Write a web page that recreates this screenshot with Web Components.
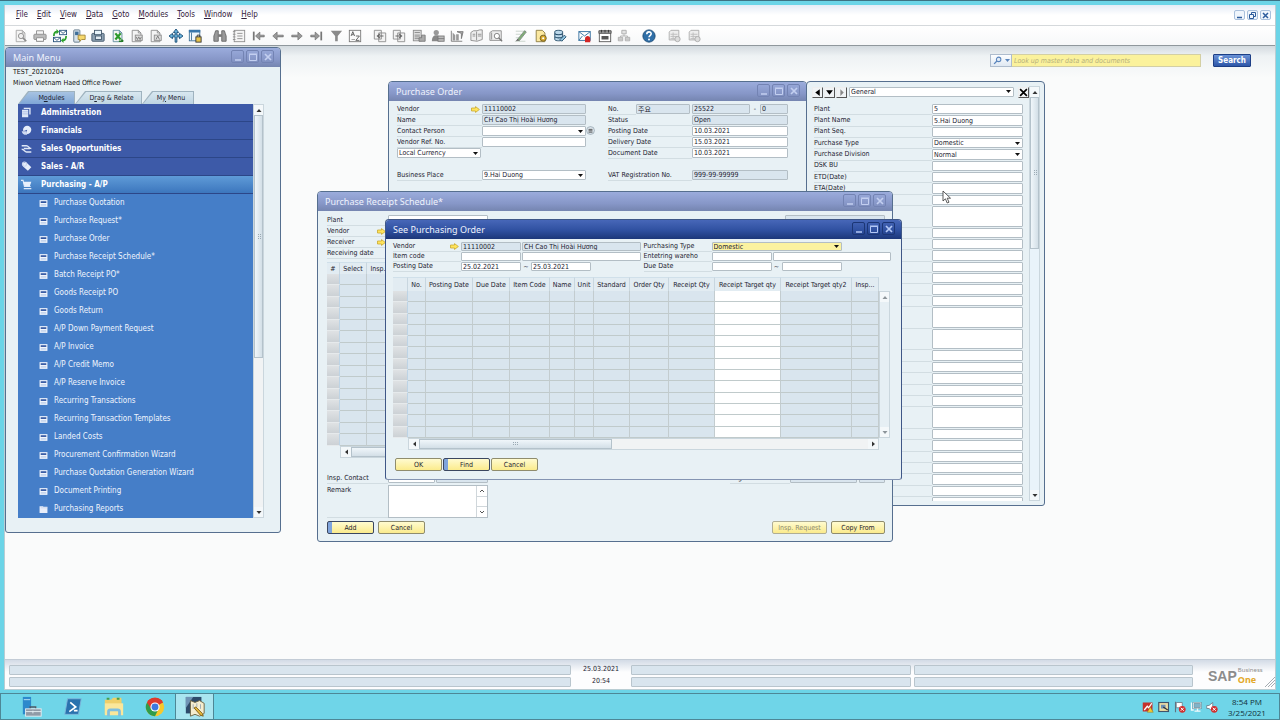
<!DOCTYPE html>
<html lang="en">
<head>
<meta charset="utf-8">
<title>SAP Business One</title>
<style>
    html, body {
        height: 100%;
        margin: 0;
    }
    body {
        --ui: "DejaVu Sans Condensed", "Open Sans", "Noto Sans CJK KR", sans-serif;
        --title: "Noto Sans", "Open Sans", sans-serif;
        --ink: #1d2230;
        --panel: #e8f1f5;
        --line: #b3bec5;
        display: flex;
        flex-direction: column;
        box-sizing: border-box;
        border-top: 1px solid #3d7284;
        background: #6bd4e7;
        color: var(--ink);
        font: 7px/10px var(--ui);
        overflow: hidden;
    }
    .app {
        flex: 1;
        min-height: 0;
        display: flex;
        flex-direction: column;
        margin: 4px 4px 3px;
        border: 1px solid #b9cdd3;
        border-top: 0;
        background: #fff;
    }
    .desktop {
        position: relative;
        flex: 1;
        min-height: 0;
        overflow: hidden;
        background: linear-gradient(#d3dadf, #eef2f4 10px, #fafbfb 32px);
    }
    /* MDI windows float freely on the desktop */
    b1-window, .cursor {
        position: absolute;
    }
    #main-menu { left: 0; top: 1px; width: 276px; height: 486px; }
    #order { left: 383px; top: 35px; width: 419px; height: 425px; }
    #user-fields { left: 801px; top: 35px; width: 239px; height: 425px; }
    #schedule { left: 312px; top: 145px; width: 576px; height: 351px; }
    #see-order { left: 380px; top: 173px; width: 517px; height: 261px; }
    .cursor { left: 937px; top: 144px; }

    .row { display: flex; }
    .col { display: flex; flex-direction: column; }
    .push { margin-left: auto; }

    .company { padding: 0 7px 2px; line-height: 11px; }
    .company div { color: #111; }
    .menu-area { padding: 0 16px 0 12px; }

    .order-form { padding: 3px 18px 0 8px; justify-content: space-between; }
    .order-form .left { width: 198px; --label: 85px; }
    .order-form .right { width: 180px; --label: 84px; }
    .gap { height: 11px; }

    .uf-bar { display: flex; align-items: center; gap: 1px; flex: 0 0 12px; margin-bottom: 6px; }
    .uf { padding: 4px 4px 4px 5px; box-sizing: border-box; height: 100%; }
    .uf-main { flex: 1; min-width: 0; min-height: 0; overflow: hidden; }
    .uf-list { flex: 0 0 393px; --label: 118px; padding: 0 6px 0 2px; }
    .uf-list b1-field { flex: 11; }
    .uf-list b1-field.tall { flex: 21; }
    .uf-rest { --label: 118px; padding: 0 6px 0 2px; }

    .schedule { box-sizing: border-box; height: 100%; padding: 4px 7px 7px 9px; }
    .schedule .head { --label: 61px; }
    .see { box-sizing: border-box; height: 100%; padding: 3px 10px 8px 7px; --row: 10px; }
    .see .head { gap: 3px; }
    .see .left { width: 248px; --label: 68px; }
    .see .right { width: 248px; --label: 68px; }
    .tilde { width: 10px; text-align: center; }
</style>
</head>
<body>

<div class="app">
    <b1-menubar></b1-menubar>
    <b1-toolbar></b1-toolbar>

    <main class="desktop">
        <b1-search></b1-search>

        <b1-window id="main-menu" heading="Main Menu">
            <div class="company">
                <div>TEST_20210204</div>
                <div>Miwon Vietnam Haed Office Power</div>
            </div>
            <div class="menu-area">
                <b1-tabs></b1-tabs>
                <b1-tree></b1-tree>
            </div>
        </b1-window>

        <b1-window id="order" heading="Purchase Order">
            <div class="row order-form">
                <div class="col left">
                    <b1-field label="Vendor" value="11110002" kind="readonly" link style="--control: 0 0 104px"></b1-field>
                    <b1-field label="Name" value="CH Cao Thị Hoài Hương" kind="readonly" style="--control: 0 0 104px"></b1-field>
                    <b1-field label="Contact Person" kind="select" style="--control: 0 0 104px"><b1-icon name="list" size="9"></b1-icon></b1-field>
                    <b1-field label="Vendor Ref. No." style="--control: 0 0 104px"></b1-field>
                    <b1-field value="Local Currency" kind="select" name="Currency" style="--control: 0 0 84px"></b1-field>
                    <div class="gap"></div>
                    <b1-field label="Business Place" value="9.Hai Duong" kind="select" style="--control: 0 0 104px"></b1-field>
                </div>
                <div class="col right">
                    <b1-field label="No." value="주요" kind="readonly" style="--label: 28px; --control: 0 0 54px">
                        <b1-field name="Number" value="25522" kind="readonly" style="width: 58px; margin-left: 2px"></b1-field>
                        <span class="tilde">-</span>
                        <b1-field name="Sub number" value="0" kind="readonly" style="flex: 1"></b1-field>
                    </b1-field>
                    <b1-field label="Status" value="Open" kind="readonly"></b1-field>
                    <b1-field label="Posting Date" value="10.03.2021"></b1-field>
                    <b1-field label="Delivery Date" value="15.03.2021"></b1-field>
                    <b1-field label="Document Date" value="10.03.2021"></b1-field>
                    <div class="gap"></div>
                    <b1-field label="VAT Registration No." value="999-99-99999" kind="readonly"></b1-field>
                </div>
            </div>
        </b1-window>

        <b1-window id="user-fields" plain>
            <div class="row uf">
                <div class="col uf-main">
                    <div class="uf-bar">
                        <b1-nav dir="left"></b1-nav>
                        <b1-nav dir="down"></b1-nav>
                        <b1-nav dir="right"></b1-nav>
                        <b1-field name="Category" value="General" kind="select" style="width: 165px; margin-left: 1px"></b1-field>
                        <b1-nav class="push" dir="close"></b1-nav>
                    </div>
                    <div class="col uf-list">
                        <b1-field label="Plant" value="5"></b1-field>
                        <b1-field label="Plant Name" value="5.Hai Duong"></b1-field>
                        <b1-field label="Plant Seq."></b1-field>
                        <b1-field label="Purchase Type" value="Domestic" kind="select"></b1-field>
                        <b1-field label="Purchase Division" value="Normal" kind="select"></b1-field>
                        <b1-field label="DSK BU"></b1-field>
                        <b1-field label="ETD(Date)"></b1-field>
                        <b1-field label="ETA(Date)"></b1-field>
                        <b1-field label=" "></b1-field>
                        <b1-field label=" " class="tall"></b1-field>
                        <b1-field label=" "></b1-field>
                        <b1-field label=" "></b1-field>
                        <b1-field label=" "></b1-field>
                        <b1-field label=" "></b1-field>
                        <b1-field label=" "></b1-field>
                        <b1-field label=" "></b1-field>
                        <b1-field label=" "></b1-field>
                        <b1-field label=" " class="tall"></b1-field>
                        <b1-field label=" " class="tall"></b1-field>
                        <b1-field label=" "></b1-field>
                        <b1-field label=" "></b1-field>
                        <b1-field label=" "></b1-field>
                        <b1-field label=" "></b1-field>
                        <b1-field label=" "></b1-field>
                        <b1-field label=" " class="tall"></b1-field>
                        <b1-field label=" "></b1-field>
                        <b1-field label=" "></b1-field>
                        <b1-field label=" "></b1-field>
                        <b1-field label=" "></b1-field>
                        <b1-field label=" "></b1-field>
                        <b1-field label=" "></b1-field>
                    </div>
                    <div class="uf-rest"><b1-field label=" "></b1-field></div>
                </div>
                <b1-scrollbar style="--thumb: 152px; --track: #e9f3fa"></b1-scrollbar>
            </div>
        </b1-window>

        <b1-window id="schedule" heading="Purchase Receipt Schedule*">
            <div class="col schedule">
                <div class="row head">
                    <div class="col" style="width: 161px">
                        <b1-field label="Plant"></b1-field>
                        <b1-field label="Vendor" kind="readonly" link></b1-field>
                        <b1-field label="Receiver" kind="readonly" link></b1-field>
                        <b1-field label="Receiving date"></b1-field>
                    </div>
                    <div class="col push" style="width: 100px">
                        <b1-field name="Document number" kind="readonly"></b1-field>
                    </div>
                </div>
                <b1-grid rows="15" head="12" columns="#:13,Select:27,Insp...:27,:60,:428" style="height: 184px; margin-top: 3px"></b1-grid>
                <b1-scrollbar horizontal style="--thumb: 160px; margin-left: 13px"></b1-scrollbar>
                <div class="row" style="margin-top: auto; margin-bottom: 1px">
                    <b1-field label="Insp. Contact" style="--label: 61px; --control: 0 0 47px; width: 161px">
                        <b1-field name="Contact name" kind="readonly" style="flex: 1; margin-left: 1px"></b1-field>
                    </b1-field>
                    <b1-field class="push" label="Register Date" kind="readonly" style="--label: 60px; --control: 0 0 67px; width: 155px">
                        <b1-field name="Register time" kind="readonly" style="flex: 1; margin-left: 2px"></b1-field>
                    </b1-field>
                </div>
                <b1-memo label="Remark"></b1-memo>
                <div class="row" style="gap: 4px; margin-top: 3px">
                    <b1-button default>Add</b1-button>
                    <b1-button>Cancel</b1-button>
                    <b1-button class="push" disabled style="width: 55px">Insp. Request</b1-button>
                    <b1-button style="width: 54px">Copy From</b1-button>
                </div>
            </div>
        </b1-window>

        <b1-window id="see-order" heading="See Purchasing Order" active>
            <div class="col see">
                <div class="row head">
                    <div class="col left">
                        <b1-field label="Vendor" value="11110002" kind="readonly" link style="--control: 0 0 60px">
                            <b1-field name="Vendor name" value="CH Cao Thị Hoài Hương" kind="readonly" style="flex: 1; margin-left: 1px"></b1-field>
                        </b1-field>
                        <b1-field label="Item code" style="--control: 0 0 60px">
                            <b1-field name="Item name" style="flex: 1; margin-left: 1px"></b1-field>
                        </b1-field>
                        <b1-field label="Posting Date" value="25.02.2021" style="--control: 0 0 60px">
                            <span class="tilde">~</span>
                            <b1-field name="Posting date to" value="25.03.2021" style="width: 60px"></b1-field>
                        </b1-field>
                    </div>
                    <div class="col right">
                        <b1-field label="Purchasing Type" value="Domestic" kind="select" focused style="--control: 0 0 130px"></b1-field>
                        <b1-field label="Entetring wareho" style="--control: 0 0 60px">
                            <b1-field name="Warehouse name" style="flex: 1; margin-left: 1px"></b1-field>
                        </b1-field>
                        <b1-field label="Due Date" style="--control: 0 0 60px">
                            <span class="tilde">~</span>
                            <b1-field name="Due date to" style="width: 60px"></b1-field>
                        </b1-field>
                    </div>
                </div>
                <div class="row" style="margin-top: 5px">
                    <b1-grid rows="13" head="14" columns=":15,No.:18,Posting Date:47,Due Date:37,Item Code:40,Name:25,Unit:19,Standard:36,Order Qty:39,Receipt Qty:46,*Receipt Target qty:66,Receipt Target qty2:71,Insp...:27" style="height: 161px"></b1-grid>
                    <b1-scrollbar off style="margin-top: 14px"></b1-scrollbar>
                </div>
                <b1-scrollbar horizontal style="--thumb: 193px; margin: 0 12px 0 15px"></b1-scrollbar>
                <div class="row" style="gap: 1px; margin: auto 0 0 2px">
                    <b1-button>OK</b1-button>
                    <b1-button default>Find</b1-button>
                    <b1-button>Cancel</b1-button>
                </div>
            </div>
        </b1-window>

        <svg class="cursor" width="10" height="15" viewBox="0 0 10 15">
            <path d="M1 1v10l2.400-2.200 1.800 4.200 1.800-.8-1.800-4h3.300z" fill="#fff" stroke="#333" stroke-width=".8"/>
        </svg>
    </main>

    <b1-statusbar></b1-statusbar>
</div>

<os-taskbar></os-taskbar>

<script>
// Icon bodies, all on a 16x16 grid
const G = '#8b8b8b';
const page = (c = G) => `<path d="M2.500 1.500h7l3 3v10h-10z" fill="#f4f4f4" stroke="${c}"/><path d="M9.500 1.500v3h3" fill="none" stroke="${c}"/>`;
const ICONS = {
    preview: page('#a5a5a5') + `<circle cx="8" cy="8" r="3" fill="#eee" stroke="${G}"/><path d="M10 10l4 4" stroke="${G}" stroke-width="2"/>`,
    print: `<path d="M4 6V2h8v4M4 10v4h8v-4" fill="#f5f5f5" stroke="${G}"/><rect x="1" y="6" width="14" height="6" rx="1" fill="#bbb" stroke="${G}"/><path d="M4 10h8v4H4z" fill="#fff" stroke="${G}"/>`,
    mail: `<rect x="7.500" y="1.500" width="8" height="5" fill="#fff" stroke="#24507a"/><path d="M8 2l3.500 3L15 2" fill="none" stroke="#24507a"/><rect x=".5" y="9.500" width="8" height="5" fill="#fff" stroke="#24507a"/><path d="M1 10l3.500 3L8 10" fill="none" stroke="#24507a"/><path d="M1 8c0-4 2-5 4-5M15 8c0 4-2 5-4 5" fill="none" stroke="#2da12d" stroke-width="2"/><path d="M4 0l3 3-3 3zM12 10l-3 3 3 3z" fill="#2da12d"/>`,
    sms: `<rect x="2" y="1" width="7" height="14" rx="1" fill="#d7e2ea" stroke="#5b7386"/><rect x="3.500" y="3" width="4" height="4" fill="#3e6e98"/><path d="M7 7h8v5h-4l-2 2v-2H7z" fill="#f6d86b" stroke="#a28430"/>`,
    fax: `<rect x="1" y="5" width="14" height="9" rx="1" fill="#8ea2b3" stroke="#3f5468"/><rect x="4" y="1.500" width="8" height="5" fill="#e8f4fb" stroke="#3f5468"/><rect x="5" y="8" width="7" height="4" fill="#e2ebf2" stroke="#3f5468"/>`,
    excel: page('#5a8a9a') + `<path d="M5 5l6 7M11 5l-6 7" stroke="#2b9a2b" stroke-width="2.500"/><path d="M9 14h5M12 12l2 2" stroke="#257b25" stroke-width="1.500"/>`,
    word: page() + `<rect x="6" y="7" width="8" height="6" fill="#ddd" stroke="${G}"/><path d="M7 9l1.500 3L10 9l1.500 3L13 9" fill="none" stroke="#777"/>`,
    pdf: page() + `<rect x="6" y="7" width="8" height="6" fill="#ddd" stroke="${G}"/><path d="M8 12l2-4 2 4" fill="none" stroke="#777"/>`,
    launch: `<path d="M8 0l3 4H9v3h3V5l4 3-4 3V9H9v6H7V9H4v2L0 8l4-3v2h3V4H5z" fill="#6ab4dd" stroke="#174a74"/>`,
    lock: `<rect x="1.500" y="1.500" width="12" height="12" fill="#eef6fb" stroke="#3a6d94"/><path d="M1 1h13v3H1z" fill="#3877ab"/><path d="M4 4v9" stroke="#3a6d94"/><rect x="9" y="9" width="6" height="6" fill="#e7c44b" stroke="#333"/><path d="M10.500 9V7h3v2" fill="none" stroke="#333"/>`,
    find: `<path d="M2 5l1-3h3v12H1V8zM14 5l-1-3h-3v12h5V8z" fill="#999" stroke="#666"/><path d="M6 6h4v3H6z" fill="#777"/>`,
    form: `<rect x="2.500" y="1.500" width="12" height="13" fill="#f5f5f5" stroke="${G}"/><path d="M6 5h6M6 8h6M6 11h6" stroke="${G}"/><path d="M1 3h3M1 6h3M1 9h3M1 12h3" stroke="${G}"/>`,
    first: `<path d="M2 3v10" stroke="#777" stroke-width="2"/><path d="M4 8l5-4.500V7h5v2H9v3.500z" fill="#999" stroke="#666" stroke-width=".7"/>`,
    prev: `<path d="M2 8l5-4.500V7h7v2H7v3.500z" fill="#999" stroke="#666" stroke-width=".7"/>`,
    next: `<path d="M14 8L9 3.500V7H2v2h7v3.500z" fill="#999" stroke="#666" stroke-width=".7"/>`,
    last: `<path d="M14 3v10" stroke="#777" stroke-width="2"/><path d="M12 8L7 3.500V7H2v2h5v3.500z" fill="#999" stroke="#666" stroke-width=".7"/>`,
    filter: `<path d="M2 2h13l-5 6v6H7V8z" fill="#8a8a8a"/>`,
    sort: `<rect x="1.500" y="1.500" width="13" height="13" fill="#fafafa" stroke="#777"/><path d="M3.500 8l2-5 2 5M4.500 6.500h2M9 8h4l-4 5h4" fill="none" stroke="#555"/><path d="M4 12h4" stroke="#999"/>`,
    base: `<path d="M1.500 1.500h8v10h-8zM6.500 4.500h8v10h-8z" fill="#f2f2f2" stroke="${G}"/><path d="M12 8H6M8 5.500L5 8l3 2.500" fill="none" stroke="#666" stroke-width="1.300"/>`,
    target: `<path d="M1.500 1.500h8v10h-8zM6.500 4.500h8v10h-8z" fill="#f2f2f2" stroke="${G}"/><path d="M4 8h6M8 5.500L11 8l-3 2.500" fill="none" stroke="#666" stroke-width="1.300"/>`,
    calc: `<rect x="1.500" y="1.500" width="9" height="12" fill="#ddd" stroke="${G}"/><path d="M3 4h6M3 7h6M3 9h6M3 11h6" stroke="#888"/><path d="M8 14V10h3V7h4v7z" fill="#aaa" stroke="#777"/>`,
    pay: `<circle cx="6" cy="4" r="3" fill="#999"/><path d="M1 14c0-5 2-7 5-7s5 2 5 7z" fill="#888"/><rect x="8" y="8" width="7" height="6" fill="#bbb" stroke="#777"/><path d="M8 11h7" stroke="#777"/>`,
    profit: `<path d="M1.500 2v12H14" fill="none" stroke="#777"/><path d="M3 13V4l3 3v6zM7 13V6h3v7z" fill="#999"/><path d="M8 3h7l-2 8V5z" fill="#aaa" stroke="#777"/>`,
    volume: `<path d="M1 13V4l3-2h4l3-1h3v11l-6 2z" fill="#eee" stroke="${G}"/><path d="M7.500 3v10M3 6h3M3 8h3M9 6h4M9 8h4" stroke="${G}"/>`,
    layout: `<path d="M1 13V4l3-2h10v11z" fill="#eee" stroke="${G}"/><circle cx="9" cy="8" r="3" fill="#fff" stroke="#777"/><path d="M11 10l4 4" stroke="#777" stroke-width="1.500"/><path d="M3 4v8" stroke="${G}"/>`,
    edit: `<path d="M2 2.500h12M1 14h12M2 6h6M2 10h4" stroke="#c5d0c8"/><path d="M4 12l8-10 2 1.500-8 10z" fill="#7fae74" stroke="#7e8b84"/><path d="M2 14l4-1-2-2z" fill="#666"/>`,
    formset: `<path d="M2.500 1.500h7l3 3v10h-10z" fill="#fbe8a0" stroke="#8a7a40"/><circle cx="10.500" cy="10.500" r="3.500" fill="#d9a92b" stroke="#6c5a22"/><circle cx="10.500" cy="10.500" r="1.200" fill="#fff"/>`,
    query: `<path d="M2 3c0-2 9-2 9 0v9c0 2-9 2-9 0z" fill="#bcd8ea" stroke="#234b68"/><path d="M2 5.500c2 1.500 7 1.500 9 0M2 9c2 1.500 7 1.500 9 0" fill="none" stroke="#234b68" stroke-width="1.300"/><path d="M8 12l5-5 2 2-5 5z" fill="#8fc3e0" stroke="#234b68"/>`,
    alert: `<rect x="1" y="3" width="13" height="10" fill="#fff" stroke="#2b6a9c"/><path d="M1 3l6.500 5L14 3M1 13l4-5" fill="none" stroke="#2b6a9c"/><path d="M8 15v-4c0-4 6-4 6 0v4z" fill="#d32626"/>`,
    calendar: `<rect x="1.500" y="2.500" width="13" height="12" fill="#fff" stroke="#555"/><path d="M1 2h14v3H1z" fill="#9a9a9a" stroke="#555"/><path d="M4 1v3M8 1v3M12 1v3" stroke="#333"/><path d="M4 8h8v4H4z" fill="#555"/>`,
    org: `<path d="M5.500 1.500h5v4h-5zM1.500 9.500h5v4h-5zM9.500 9.500h5v4h-5z" fill="#e3e3e3" stroke="#aaa"/><path d="M8 6v2M4 9V8h8v1M2 11.500h4M10 11.500h4" stroke="#aaa" fill="none"/>`,
    help: `<circle cx="8" cy="8" r="7" fill="#2f6fa8" stroke="#1c4a75"/><path d="M5.500 6c0-3.500 5-3.500 5-.5 0 2-2.500 2-2.500 4" fill="none" stroke="#fff" stroke-width="1.800"/><circle cx="8" cy="12" r="1.100" fill="#fff"/>`,
    task: `<path d="M2.500 3.500l2-2h9v11h-11z" fill="#eee" stroke="#aaa"/><path d="M4 6h8M4 8.500h8M4 11h5M7 4v8" stroke="#bbb"/><circle cx="12" cy="11.500" r="3" fill="#ddd" stroke="#aaa"/>`,
    list: `<circle cx="8" cy="8" r="7" fill="#dde6ec" stroke="#7d8f9b"/><path d="M4.500 6h7M4.500 8.500h7M4.500 11h7" stroke="#333" stroke-width="1.300"/>`,
    docs: `<path d="M4 1h10v10h-2V3H4zM1.500 4h9v11h-9z" fill="#dfe7f7"/><path d="M2 7h8M2 10h8" stroke="#9fb2dd"/>`,
    pie: `<circle cx="9" cy="7" r="6" fill="#e6edfa"/><path d="M9 7L3 9v5h4z" fill="#3c59a7"/><path d="M1 9c1 5 5 6 8 5L8 9z" fill="#cfdaf1"/>`,
    shake: `<path d="M1 4h7c3 0 4 4 7 4M15 13H8C5 13 5 9 1 9M4 8h9" fill="none" stroke="#dfe7f7" stroke-width="2"/>`,
    tag: `<path d="M3 3l5-1 7 7-5 5-7-6z" fill="#e6edfa"/><circle cx="5" cy="4.500" r="3" fill="none" stroke="#cbd6ef" stroke-width="1.500"/>`,
    cart: `<path d="M0 2h3l2 9h9" fill="none" stroke="#dfeafa" stroke-width="1.600"/><path d="M3 4h12l-2 6H5z" fill="#e8f0fc"/><path d="M4 14h11" stroke="#dfeafa" stroke-width="2"/>`,
    win: `<rect x="1" y="2" width="14" height="12" fill="#f1f5fc"/><path d="M3 4h10v3H3z" fill="#2f55a0"/><path d="M3 9h10v3H3z" fill="#c5d4ec"/>`,
    folder: `<path d="M1 4V2h6l1 1h7v11H1z" fill="#e8eefa"/><path d="M3 5h12" stroke="#b9c8e6"/>`,
    lens: `<circle cx="10" cy="6" r="4" fill="#e1ecf8" stroke="#5b86bd" stroke-width="1.800"/><path d="M7 9l-5 5" stroke="#5b86bd" stroke-width="2.400"/>`
};

const TASK_ICONS = {
    server: `<path d="M2 1h9v19H2z" fill="#2c89cc"/><path d="M3 4h7" stroke="#bfe3f7"/><path d="M10 14v-2h6v2" fill="none" stroke="#4d5a66" stroke-width="1.500"/><rect x="5" y="14" width="17" height="8" fill="#8f9aa6" stroke="#e5edf2"/><path d="M5 17h17M13 16v3" stroke="#e5edf2"/>`,
    shell: `<path d="M6 3h15l-3 17H3z" fill="#2a72ae" stroke="#7fb6db"/><path d="M9 7l6 5-7 5M13 16h4" fill="none" stroke="#fff" stroke-width="1.800"/>`,
    files: `<path d="M2 4h7l2-2h9l1 18H2z" fill="#efcf6a"/><path d="M2 8h20v13H2z" fill="#fae79b"/><path d="M4 3h3M15 3h3" stroke="#47a04a" stroke-width="2"/><path d="M6 22v-5q0-2 2-2h8q2 0 2 2v5" fill="none" stroke="#7fbfe0" stroke-width="3"/>`,
    chrome: `<circle cx="12" cy="12" r="10" fill="#f7c82c"/><path d="M12 12L3.300 7A10 10 0 0 1 20.700 7z" fill="#dd3b2e"/><path d="M12 12L3.300 7A10 10 0 0 0 12 22l4-8z" fill="#2f9c4b"/><path d="M12 7h8.700A10 10 0 0 0 3.300 7l4.400 7z" fill="#dd3b2e"/><circle cx="12" cy="12" r="5" fill="#fff"/><circle cx="12" cy="12" r="3.800" fill="#3f78dd"/>`,
    sap: `<path d="M2 1h17v18H2z" fill="#2d4a6b"/><path d="M2 1h8l-8 12z" fill="#6f93b5"/><path d="M7 5l5 2 5-2 5 3v11l-5 3-5-2-5 2z" fill="#f5edcf" stroke="#6b6242"/><path d="M10 9v5M14 8v4M18 9v5" stroke="#9aa8b4"/><path d="M11 13l7 8 3 1-1-3-7-7z" fill="#e8b93a" stroke="#7c5f1c"/>`
};

const TRAY_ICONS = {
    av: `<path d="M1 2h13v12H1z" fill="#c5312c"/><path d="M3 12l4-5 2 2 4-6" fill="none" stroke="#fff" stroke-width="1.800"/><path d="M7 15l4-7 4 7z" fill="#f4c934" stroke="#8a6d12" stroke-width=".6"/>`,
    vm: `<rect x="1" y="2" width="13" height="12" fill="#ecdca5" stroke="#40536a" stroke-width="1.500"/><path d="M4 5h6v5H4z" fill="#6c8fb5"/><path d="M7 8l6 4" stroke="#333" stroke-width="1.500"/>`,
    flag: `<path d="M2 1v14" stroke="#607380" stroke-width="1.500"/><path d="M3 2h8v7H3z" fill="#fff" stroke="#607380"/><circle cx="11" cy="11" r="4.500" fill="#d03030"/><path d="M9 9l4 4M13 9l-4 4" stroke="#fff" stroke-width="1.300"/>`,
    net: `<rect x="4.500" y="2.500" width="10" height="7" fill="#7fb3c9" stroke="#4c6c7b" stroke-width="2"/><rect x="4.500" y="2.500" width="10" height="7" fill="none" stroke="#f3fafc"/><path d="M2 2v10h3M6 13.500h8M10 10v3" fill="none" stroke="#f3fafc" stroke-width="1.800"/>`,
    sound: `<path d="M1 6h3l5-4v12l-5-4H1z" fill="#fff" stroke="#607380"/><circle cx="11" cy="11" r="4.500" fill="#d03030"/><path d="M9 9l4 4M13 9l-4 4" stroke="#fff" stroke-width="1.300"/>`
};

class B1Element extends HTMLElement {
    connectedCallback() {
        if (this.shadowRoot) return;
        this.attachShadow({ mode: 'open' });
        this.shadowRoot.innerHTML = this.render();
    }

    attr(name, fallback = '') {
        return this.getAttribute(name) ?? fallback;
    }
}

class B1Icon extends B1Element {
    render() {
        const size = this.attr('size', '14');
        return `
            <style>
                :host { display: inline-flex; flex: none; }
            </style>
            <svg width="${size}" height="${size}" viewBox="0 0 16 16" aria-hidden="true">${ICONS[this.attr('name')]}</svg>
        `;
    }
}
customElements.define('b1-icon', B1Icon);

class B1Menubar extends B1Element {
    render() {
        const items = ['File', 'Edit', 'View', 'Data', 'Goto', 'Modules', 'Tools', 'Window', 'Help'];
        return `
            <style>
                :host {
                    display: flex;
                    align-items: center;
                    height: 20px;
                    padding: 0 4px 0 11px;
                    background: linear-gradient(#e4ebf6, #fff 10px);
                    border-bottom: 1px solid #d5d9dc;
                    font: 8px/12px var(--ui);
                }
                nav { display: flex; gap: 9px; flex: 1; }
                a { display: inline-block; color: #33203a; text-decoration: none; }
                a::first-letter { text-decoration: underline; }
                button {
                    width: 11px;
                    height: 10px;
                    margin-left: 2px;
                    padding: 0;
                    border: 1px solid #a9c0dc;
                    border-radius: 2px;
                    background: #eff5fc;
                    display: inline-flex;
                    align-items: center;
                    justify-content: center;
                }
            </style>
            <nav>${items.map((t) => `<a href="#">${t}</a>`).join('')}</nav>
            <button aria-label="Minimize"><svg width="7" height="7"><path d="M1 5.500h5" stroke="#2d5c9c" stroke-width="1.500"/></svg></button>
            <button aria-label="Restore"><svg width="7" height="7"><path d="M2.500 2.500v-2h4v4h-2M.5 2.500h4v4h-4z" fill="none" stroke="#2d5c9c"/></svg></button>
            <button aria-label="Close"><svg width="7" height="7"><path d="M1 1l5 5M6 1L1 6" stroke="#2d5c9c" stroke-width="1.500"/></svg></button>
        `;
    }
}
customElements.define('b1-menubar', B1Menubar);

class B1Toolbar extends B1Element {
    render() {
        const groups = [
            [188, 'preview print mail sms fax excel word pdf launch lock'],
            [149, 'find form first prev next last filter sort'],
            [130, 'base target calc pay profit volume layout'],
            [53, 'edit formset query'],
            [53, 'alert calendar org'],
            [14, 'help'],
            [34, 'task task']
        ];
        return `
            <style>
                :host {
                    display: flex;
                    align-items: center;
                    gap: 11px;
                    height: 19px;
                    padding-left: 9px;
                    background: linear-gradient(#fff, #f7f8f9);
                    border-bottom: 1px solid #8f979c;
                }
                div { display: flex; justify-content: space-between; }
                button { display: flex; padding: 0; border: 0; background: none; }
            </style>
            ${groups.map(([width, names]) => `
                <div style="width: ${width}px">
                    ${names.split(' ').map((n) => `<button aria-label="${n}"><b1-icon name="${n}"></b1-icon></button>`).join('')}
                </div>`).join('')}
        `;
    }
}
customElements.define('b1-toolbar', B1Toolbar);

class B1Search extends B1Element {
    render() {
        return `
            <style>
                :host { display: flex; justify-content: flex-end; padding: 8px 24px 0 0; }
                .kind {
                    display: flex;
                    align-items: center;
                    justify-content: center;
                    gap: 3px;
                    box-sizing: border-box;
                    width: 22px;
                    height: 13px;
                    padding: 0;
                    border: 1px solid #aebccd;
                    background: linear-gradient(#fdfeff, #dfe8f2);
                }
                input {
                    box-sizing: border-box;
                    width: 189px;
                    height: 13px;
                    padding: 0 2px;
                    border: 1px solid #d3cfa4;
                    border-left: 0;
                    background: #fbf29c;
                    font: italic 7px/11px var(--ui);
                    outline: 0;
                }
                input::placeholder { color: #b5b07c; }
                .go {
                    width: 38px;
                    height: 13px;
                    margin-left: 12px;
                    padding: 0;
                    border: 1px solid #1d3f86;
                    border-radius: 1px;
                    background: linear-gradient(#6a92d6, #2d56a8);
                    color: #fff;
                    font: bold 8px/11px var(--ui);
                }
            </style>
            <button class="kind" aria-label="Search type">
                <b1-icon name="lens" size="9"></b1-icon>
                <svg width="5" height="4"><path d="M0 0h5L2.500 3z" fill="#5b86bd"/></svg>
            </button>
            <input aria-label="Search" placeholder="Look up master data and documents">
            <button class="go">Search</button>
        `;
    }
}
customElements.define('b1-search', B1Search);

class B1Window extends B1Element {
    render() {
        const bar = `
            <header>
                <h2>${this.attr('heading')}</h2>
                <button aria-label="Minimize"><svg width="10" height="10"><path d="M2 8h6" stroke="currentColor" stroke-width="1.500"/></svg></button>
                <button aria-label="Maximize"><svg width="10" height="10"><path d="M1.500 2.500h7v6h-7zM1 2h8" fill="none" stroke="currentColor"/></svg></button>
                <button aria-label="Close"><svg width="10" height="10"><path d="M2 2l6 6M8 2L2 8" stroke="currentColor" stroke-width="1.700"/></svg></button>
            </header>`;
        return `
            <style>
                :host {
                    display: flex;
                    flex-direction: column;
                    box-sizing: border-box;
                    border: 1px solid #566f8f;
                    border-radius: 4px 4px 3px 3px;
                    background: var(--panel);
                    overflow: hidden;
                }
                header {
                    display: flex;
                    align-items: center;
                    gap: 2px;
                    flex: 0 0 19px;
                    box-sizing: border-box;
                    padding: 0 6px 2px 7px;
                    background: linear-gradient(#9bacdc, #8797c8 60%, #7585b0);
                    color: #c3cff0;
                }
                h2 {
                    flex: 1;
                    margin: 0;
                    padding-top: 2px;
                    color: #eef2fc;
                    font: 9px/15px var(--title);
                }
                button {
                    display: flex;
                    align-items: center;
                    justify-content: center;
                    width: 13px;
                    height: 13px;
                    padding: 0;
                    border: 1px solid #7383b3;
                    border-radius: 2px;
                    background: none;
                    color: inherit;
                }
                :host([active]) {
                    border-color: #3f5787;
                    border-bottom-color: #8494b2;
                }
                :host([active]) header {
                    background: linear-gradient(#4767b8, #2f50a0 55%, #1c3779);
                    color: #b4c8f5;
                }
                :host([active]) button { border-color: #1c3675; }
                .body { flex: 1; min-height: 0; }
            </style>
            ${this.hasAttribute('plain') ? '' : bar}
            <div class="body"><slot></slot></div>
        `;
    }
}
customElements.define('b1-window', B1Window);

class B1Field extends B1Element {
    render() {
        const label = this.attr('label');
        const value = this.attr('value');
        const kind = this.attr('kind', 'text');
        const aria = label.trim() ? '' : `aria-label="${this.attr('name', 'User field')}"`;
        const arrow = `<svg width="9" height="7" viewBox="0 0 9 7"><path d="M.5 2h4V.6L8.400 3.500 4.500 6.400V5h-4z" fill="#ffe45c" stroke="#c9a82e" stroke-width=".8"/></svg>`;
        const control = kind === 'select'
            ? `<select id="c" ${aria}><option>${value}</option></select><svg class="drop" width="5" height="3"><path d="M0 0h5L2.500 3z" fill="#111"/></svg>`
            : `<input id="c" ${aria} value="${value}" ${kind === 'readonly' ? 'readonly' : ''}>`;
        return `
            <style>
                :host { display: flex; height: var(--row, 11px); min-height: 0; min-width: 0; }
                label {
                    display: flex;
                    align-items: center;
                    flex: 0 0 var(--label, 60px);
                    box-sizing: border-box;
                    border-bottom: 1px solid #d2dde2;
                    line-height: 9px;
                    white-space: nowrap;
                }
                label svg { margin: 0 2px 0 auto; }
                .control {
                    display: grid;
                    grid-template-rows: minmax(0, 1fr);
                    flex: var(--control, 1 1 0);
                    min-width: 0;
                    padding-bottom: 1px;
                }
                input, select {
                    grid-area: 1 / 1;
                    box-sizing: border-box;
                    width: 100%;
                    height: 100%;
                    min-width: 0;
                    min-height: 0;
                    margin: 0;
                    padding: 0 1px;
                    appearance: none;
                    border: 1px solid var(--line);
                    border-radius: 1px;
                    background: #fff;
                    color: inherit;
                    font: inherit;
                    line-height: 8px;
                    outline: 0;
                }
                input[readonly] { background: #d9e5ee; }
                :host([focused]) select { background: #fbf2a0; }
                .drop { grid-area: 1 / 1; place-self: center end; margin-right: 3px; pointer-events: none; }
                slot { display: contents; --label: 0px; --control: 1 1 0; }
            </style>
            ${label ? `<label for="c">${label}${this.hasAttribute('link') ? arrow : ''}</label>` : ''}
            <div class="control">${control}</div>
            <slot></slot>
        `;
    }
}
customElements.define('b1-field', B1Field);

class B1Memo extends B1Element {
    render() {
        return `
            <style>
                :host { display: flex; height: 33px; }
                label { flex: 0 0 61px; border-bottom: 1px solid #d2dde2; }
                .box { display: flex; width: 98px; border: 1px solid var(--line); background: #fff; }
                textarea { flex: 1; min-width: 0; padding: 1px; border: 0; resize: none; font: inherit; outline: 0; }
                .bar { display: flex; flex-direction: column; justify-content: space-between; width: 10px; border-left: 1px solid #d0d7db; }
                .bar svg { border-bottom: 1px solid #d0d7db; }
                .bar svg + svg { border: 0; border-top: 1px solid #d0d7db; }
            </style>
            <label for="t">${this.attr('label')}</label>
            <div class="box">
                <textarea id="t"></textarea>
                <div class="bar">
                    <svg width="10" height="10"><path d="M3 6l2-2 2 2" fill="none" stroke="#555"/></svg>
                    <svg width="10" height="10"><path d="M3 4l2 2 2-2" fill="none" stroke="#555"/></svg>
                </div>
            </div>
        `;
    }
}
customElements.define('b1-memo', B1Memo);

class B1Button extends B1Element {
    render() {
        return `
            <style>
                :host { display: block; width: 47px; }
                button {
                    display: block;
                    box-sizing: border-box;
                    width: 100%;
                    height: 13px;
                    padding: 0;
                    border: 1px solid #8f8c6d;
                    border-radius: 2px;
                    background: linear-gradient(#fffbd0, #fbeb8c);
                    color: var(--ink);
                    font: 7px/10px var(--ui);
                }
                :host([default]) button {
                    border-color: #3b4760;
                    background: linear-gradient(90deg, #7fa4dc 4px, transparent 4px), linear-gradient(#fffbd0, #fbeb8c);
                }
                :host([disabled]) button { color: #8d8b70; border-color: #b0ae94; }
            </style>
            <button ${this.hasAttribute('disabled') ? 'disabled' : ''}><slot></slot></button>
        `;
    }
}
customElements.define('b1-button', B1Button);

class B1Nav extends B1Element {
    render() {
        const glyphs = {
            left: '<path d="M6 1v6L2 4z" fill="#000"/>',
            down: '<path d="M1 2h6L4 6z" fill="#000"/>',
            right: '<path d="M3 1v6l3-3z" fill="#888"/>',
            close: '<path d="M1 1l6 6M7 1L1 7" stroke="#000" stroke-width="1.500"/>'
        };
        return `
            <style>
                :host { display: block; }
                button {
                    display: flex;
                    padding: 0;
                    border: 1px solid #555;
                    border-top-color: #eee;
                    border-left-color: #eee;
                    background: #f0f3f5;
                }
            </style>
            <button aria-label="${this.attr('dir')}"><svg width="9" height="9" viewBox="0 0 8 8">${glyphs[this.attr('dir')]}</svg></button>
        `;
    }
}
customElements.define('b1-nav', B1Nav);

class B1Scrollbar extends B1Element {
    render() {
        const flat = this.hasAttribute('horizontal');
        const ink = this.hasAttribute('off') ? '#8c9499' : '#333';
        const back = flat ? 'M6 1.500v5L3 4z' : 'M1.500 6h5L4 3z';
        const forward = flat ? 'M3 1.500v5L6 4z' : 'M1.500 3h5L4 6z';
        return `
            <style>
                :host {
                    display: flex;
                    flex-direction: column;
                    align-items: stretch;
                    box-sizing: border-box;
                    flex: 0 0 11px;
                    border: 1px solid #cad6dd;
                    background: var(--track, #f1f3f4);
                }
                :host([horizontal]) { flex-direction: row; flex: 0 0 12px; }
                :host([off]) { background: #e6eff4; }
                .end { display: flex; align-items: center; justify-content: center; flex: 0 0 10px; background: #f4f8fa; }
                .thumb {
                    display: flex;
                    align-items: center;
                    justify-content: center;
                    flex: 0 0 var(--thumb);
                    box-sizing: border-box;
                    border: 1px solid #b4c2cb;
                    background: linear-gradient(90deg, #f0f6fa, #d3dfe7);
                }
                :host([horizontal]) .thumb { background: linear-gradient(#f0f6fa, #d3dfe7); }
                .thumb svg { flex: none; }
                :host(:not([horizontal])) .thumb svg { transform: rotate(90deg); }
                .track { flex: 1; }
            </style>
            <div class="end"><svg width="8" height="8"><path d="${back}" fill="${ink}"/></svg></div>
            ${this.hasAttribute('off') ? '' : '<div class="thumb"><svg width="6" height="4"><path d="M0 .5h1M2 .5h1M4 .5h1M0 2.500h1M2 2.500h1M4 2.500h1" stroke="#9aa9b3"/></svg></div>'}
            <div class="track"></div>
            <div class="end"><svg width="8" height="8"><path d="${forward}" fill="${ink}"/></svg></div>
        `;
    }
}
customElements.define('b1-scrollbar', B1Scrollbar);

class B1Grid extends B1Element {
    render() {
        // "*" in front of a column title marks an editable column
        const columns = this.attr('columns').split(',').map((c) => {
            const [title, width] = c.split(':');
            return { title: title.replace('*', ''), width, open: title.startsWith('*') };
        });
        const cells = columns.map((c) => `<td${c.open ? ' class="open"' : ''}></td>`).join('');
        return `
            <style>
                :host { display: block; flex: none; }
                table {
                    table-layout: fixed;
                    width: ${columns.reduce((sum, c) => sum + Number(c.width), 0)}px;
                    max-width: 100%;
                    height: 100%;
                    border-collapse: separate;
                    border-spacing: 0;
                    background: #d9e5ee;
                }
                th {
                    height: ${this.attr('head')}px;
                    padding: 0;
                    overflow: hidden;
                    background: #e2ecf2;
                    border-right: 1px solid #c8d6df;
                    border-top: 1px solid #d0e0ea;
                    box-sizing: border-box;
                    font-weight: normal;
                    white-space: nowrap;
                }
                td {
                    padding: 0;
                    border-right: 1px solid #c3cccf;
                    border-bottom: 1px solid #c0cacb;
                }
                td:first-child { background: linear-gradient(#dfe2e4, #ccd1d5); border-bottom-color: #e6eaec; border-right-color: #bdd4e6; }
                td.open { background: #fff; }
            </style>
            <table>
                <colgroup>${columns.map((c) => `<col style="width: ${c.width}px">`).join('')}</colgroup>
                <thead><tr>${columns.map((c) => `<th>${c.title}</th>`).join('')}</tr></thead>
                <tbody>${`<tr>${cells}</tr>`.repeat(Number(this.attr('rows')))}</tbody>
            </table>
        `;
    }
}
customElements.define('b1-grid', B1Grid);

class B1Tabs extends B1Element {
    render() {
        return `
            <style>
                :host { display: flex; height: 13px; }
                button {
                    padding: 0 6px 0 12px;
                    border: 0;
                    background: #9fb3bf;
                    clip-path: polygon(0 100%, 10px 0, 100% 0, 100% 100%);
                    color: var(--ink);
                    font: 7px/12px var(--ui);
                    position: relative;
                    z-index: 0;
                }
                button::before {
                    content: "";
                    position: absolute;
                    inset: 1px 1px 0 1px;
                    z-index: -1;
                    background: linear-gradient(#d8e7f0, #bfd5e2);
                    clip-path: polygon(0 100%, 10px 0, 100% 0, 100% 100%);
                }
                button.on::before { background: linear-gradient(#a7c3e2, #7fa6d6); }
                .on { width: 57px; padding-left: 16px; }
                .b { width: 67px; }
                .c { width: 52px; }
            </style>
            <button class="on">M<u>o</u>dules</button>
            <button class="b">D<u>r</u>ag &amp; Relate</button>
            <button class="c">M<u>y</u> Menu</button>
        `;
    }
}
customElements.define('b1-tabs', B1Tabs);

class B1Tree extends B1Element {
    render() {
        const modules = [
            ['docs', 'Administration'],
            ['pie', 'Financials'],
            ['shake', 'Sales Opportunities'],
            ['tag', 'Sales - A/R'],
            ['cart', 'Purchasing - A/P']
        ];
        const forms = [
            'Purchase Quotation', 'Purchase Request*', 'Purchase Order', 'Purchase Receipt Schedule*',
            'Batch Receipt PO*', 'Goods Receipt PO', 'Goods Return', 'A/P Down Payment Request',
            'A/P Invoice', 'A/P Credit Memo', 'A/P Reserve Invoice', 'Recurring Transactions',
            'Recurring Transaction Templates', 'Landed Costs', 'Procurement Confirmation Wizard',
            'Purchase Quotation Generation Wizard', 'Document Printing', 'Purchasing Reports'
        ];
        return `
            <style>
                :host { display: flex; height: 414px; }
                ul { flex: 1; margin: 0; padding: 0; list-style: none; background: #457ec8; overflow: hidden; }
                li { height: 18px; }
                a {
                    display: flex;
                    align-items: center;
                    box-sizing: border-box;
                    height: 18px;
                    gap: 6px;
                    padding-left: 21px;
                    color: #f0f5fd;
                    font: 8px/12px var(--ui);
                    text-decoration: none;
                }
                .module a {
                    gap: 9px;
                    padding-left: 3px;
                    border-bottom: 1px solid #2c4688;
                    background: #3d5aa8;
                    color: #fff;
                    font-weight: bold;
                }
                .module.on a { background: linear-gradient(#5f9bd8, #3c76bd); }
            </style>
            <ul>
                ${modules.map(([icon, text], i) => `<li class="module${i === 4 ? ' on' : ''}"><a href="#"><b1-icon name="${icon}" size="11"></b1-icon>${text}</a></li>`).join('')}
                ${forms.map((text) => `<li><a href="#"><b1-icon name="${text === 'Purchasing Reports' ? 'folder' : 'win'}" size="9"></b1-icon>${text}</a></li>`).join('')}
            </ul>
            <b1-scrollbar style="--thumb: 243px"></b1-scrollbar>
        `;
    }
}
customElements.define('b1-tree', B1Tree);

class B1Statusbar extends B1Element {
    render() {
        return `
            <style>
                :host {
                    display: grid;
                    grid-template-columns: 562fr 60px 280fr 3px 279fr 82px;
                    grid-template-rows: 10px 10px;
                    row-gap: 2px;
                    flex: 0 0 22px;
                    padding: 5px 0 2px 4px;
                    border-top: 1px solid #c3ccd6;
                    background: linear-gradient(#d3dbe6, #fdfdfe 12px);
                }
                .slot { box-sizing: border-box; border: 1px solid #b9c5cd; border-radius: 1px; background: #d9e5ee; }
                time { text-align: center; grid-column: 2; font: 7px/8px var(--ui); }
                .a { grid-column: 1; }
                .b { grid-column: 3; }
                .c { grid-column: 5; }
                .r1 { grid-row: 1; }
                .r2 { grid-row: 2; }
                .logo {
                    grid-column: 6;
                    grid-row: 1 / 3;
                    display: flex;
                    align-items: center;
                    gap: 1px;
                    padding-left: 15px;
                    color: #8c8c8c;
                    font: bold 14px/16px "Liberation Sans", sans-serif;
                }
                .logo div { display: flex; flex-direction: column; }
                .logo span { font: 6px/8px var(--title); }
                .logo em { color: #e3a92b; font: bold 9px/12px var(--title); }
                .grip { align-self: flex-end; margin-left: auto; }
            </style>
            <div class="slot a r1"></div><time class="r1">25.03.2021</time><div class="slot b r1"></div><div class="slot c r1"></div>
            <div class="slot a r2"></div><time class="r2">20:54</time><div class="slot b r2"></div><div class="slot c r2"></div>
            <div class="logo">SAP<div><span>Business</span><em>One</em></div>
                <svg class="grip" width="10" height="10"><path d="M0 10L10 0M3 10l7-7M6 10l4-4" stroke="#a5acb2"/></svg>
            </div>
        `;
    }
}
customElements.define('b1-statusbar', B1Statusbar);

class OsTaskbar extends B1Element {
    render() {
        const apps = Object.entries(TASK_ICONS);
        return `
            <style>
                :host {
                    display: flex;
                    flex: 0 0 25px;
                    padding: 0 2px 0 10px;
                    border: 1px solid #4d8796;
                    background: #6fd5e8;
                }
                .apps { display: flex; flex: 1; }
                button { display: flex; align-items: center; justify-content: center; padding: 0; border: 0; background: none; }
                .apps button { width: 41px; }
                .apps .on { width: 39px; background: #a9e5f0; border: solid #4d8796; border-width: 0 1px; }
                .tray { display: flex; align-items: center; gap: 4px; padding-right: 7px; }
                time { align-self: center; width: 44px; margin-right: 8px; text-align: center; font: 8px/11px "Open Sans", sans-serif; color: #12303a; }
            </style>
            <div class="apps">
                ${apps.map(([name, body]) => `<button class="${name === 'sap' ? 'on' : ''}" aria-label="${name}"><svg width="22" height="22" viewBox="0 0 24 24">${body}</svg></button>`).join('')}
            </div>
            <div class="tray">
                ${Object.entries(TRAY_ICONS).map(([name, body]) => `<button aria-label="${name}"><svg width="12" height="12" viewBox="0 0 16 16">${body}</svg></button>`).join('')}
            </div>
            <time>8:54 PM<br>3/25/2021</time>
        `;
    }
}
customElements.define('os-taskbar', OsTaskbar);
</script>
</body>
</html>
